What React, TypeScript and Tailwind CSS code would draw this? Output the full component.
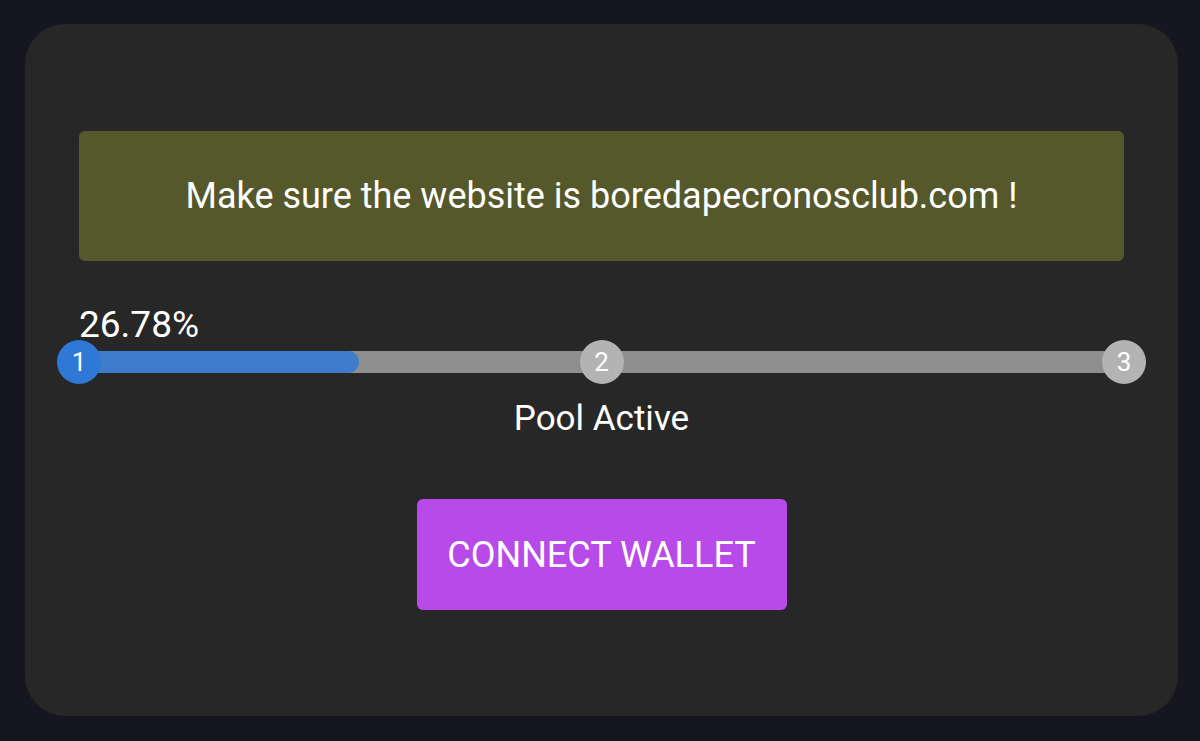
export default function App() {
  const progress = 26.78;
  return (
    <main
      className="min-h-screen w-full bg-[#161620] px-[25px] pt-[24px] pb-[25px]"
      style={{ fontFamily: "Roboto, 'Liberation Sans', sans-serif" }}
    >
      <div className="flex h-[692px] w-[1153px] flex-col rounded-[40px] bg-[#272727] px-[54px] pt-[107px]">
        <div className="flex h-[130px] items-center justify-center rounded-[6px] bg-[#55582a] text-[36px] text-white">
          Make sure the website is boredapecronosclub.com !
        </div>

        <div className="mt-[44px] text-[37px] leading-[40px] text-white">{progress}%</div>

        <div className="relative mt-[6px] h-[22px] rounded-full bg-[#8e8e8e]">
          <div
            className="h-full rounded-full bg-[#3f7ccb]"
            style={{ width: `${progress}%` }}
          />
          <div className="absolute left-[-22px] top-[-11px] flex h-[44px] w-[44px] items-center justify-center rounded-full bg-[#2f78d6] text-[26px] text-white">
            1
          </div>
          <div className="absolute left-1/2 top-[-11px] ml-[-22px] flex h-[44px] w-[44px] items-center justify-center rounded-full bg-[#b3b3b3] text-[26px] text-white">
            2
          </div>
          <div className="absolute right-[-22px] top-[-11px] flex h-[44px] w-[44px] items-center justify-center rounded-full bg-[#b3b3b3] text-[26px] text-white">
            3
          </div>
        </div>

        <div className="mt-[26px] text-center text-[35px] leading-[40px] text-white">Pool Active</div>

        <div className="mt-[60px] flex justify-center">
          <button className="h-[111px] w-[370px] rounded-[6px] bg-[#b84ae9] text-[36px] text-white">
            CONNECT WALLET
          </button>
        </div>
      </div>
    </main>
  );
}
